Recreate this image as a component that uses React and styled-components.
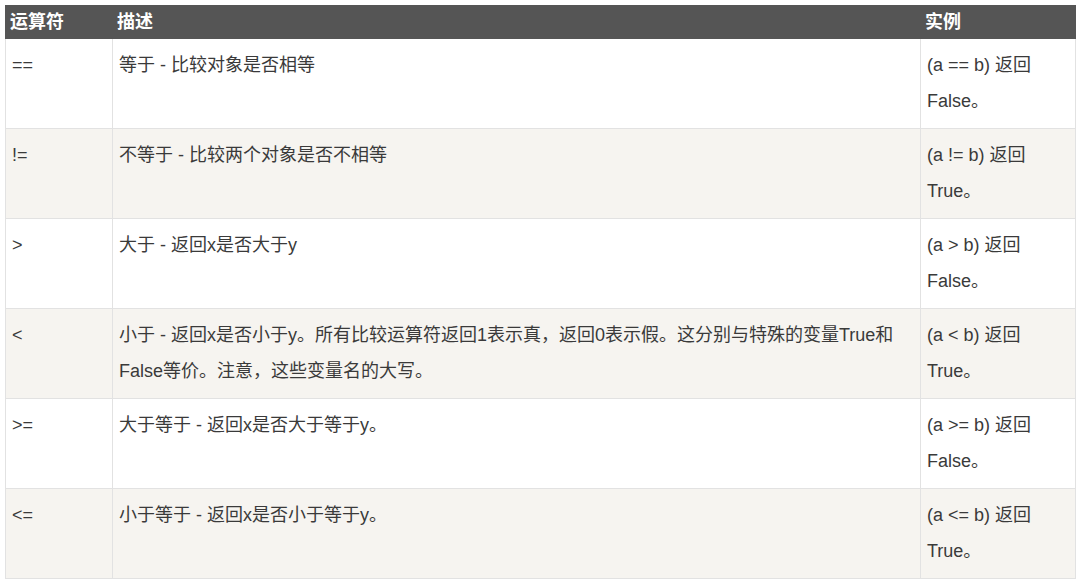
import React from "react";
import styled, { createGlobalStyle } from "styled-components";

const GlobalStyle = createGlobalStyle`
  html, body {
    margin: 0;
    padding: 0;
    background: #ffffff;
  }
  body {
    font-family: "Liberation Sans", Arial, "Noto Sans CJK SC", sans-serif;
  }
`;

const Page = styled.div`
  padding: 5px 0 0 5px;
`;

const Table = styled.table`
  width: 1070px;
  border-collapse: collapse;
  table-layout: fixed;
  font-size: 18px;
  color: #3a3a3a;
`;

const HeadCell = styled.th`
  box-sizing: border-box;
  height: 33px;
  padding: 0 4px;
  background: #555555;
  color: #ffffff;
  font-weight: bold;
  text-align: left;
  line-height: 32px;
  border: 1px solid #555555;
`;

const Row = styled.tr`
  background: ${(p) => (p.alt ? "#f6f4f0" : "#ffffff")};
`;

const Cell = styled.td`
  box-sizing: border-box;
  vertical-align: top;
  padding: 8px 6px 9px 6px;
  line-height: 36px;
  border: 1px solid #e2e2e2;
`;

const rows = [
  { op: "==", desc: "等于 - 比较对象是否相等", ex: "(a == b) 返回", res: "False。" },
  { op: "!=", desc: "不等于 - 比较两个对象是否不相等", ex: "(a != b) 返回", res: "True。" },
  { op: ">", desc: "大于 - 返回x是否大于y", ex: "(a > b) 返回", res: "False。" },
  {
    op: "<",
    desc: "小于 - 返回x是否小于y。所有比较运算符返回1表示真，返回0表示假。这分别与特殊的变量True和False等价。注意，这些变量名的大写。",
    ex: "(a < b) 返回",
    res: "True。",
  },
  { op: ">=", desc: "大于等于 - 返回x是否大于等于y。", ex: "(a >= b) 返回", res: "False。" },
  { op: "<=", desc: "小于等于 - 返回x是否小于等于y。", ex: "(a <= b) 返回", res: "True。" },
];

export default function App() {
  return (
    <Page>
      <GlobalStyle />
      <Table>
        <colgroup>
          <col style={{ width: "107px" }} />
          <col style={{ width: "808px" }} />
          <col style={{ width: "155px" }} />
        </colgroup>
        <thead>
          <tr>
            <HeadCell>运算符</HeadCell>
            <HeadCell>描述</HeadCell>
            <HeadCell>实例</HeadCell>
          </tr>
        </thead>
        <tbody>
          {rows.map((r, i) => (
            <Row key={i} alt={i % 2 === 1}>
              <Cell>{r.op}</Cell>
              <Cell>{r.desc}</Cell>
              <Cell>
                {r.ex}
                <br />
                {r.res}
              </Cell>
            </Row>
          ))}
        </tbody>
      </Table>
    </Page>
  );
}
